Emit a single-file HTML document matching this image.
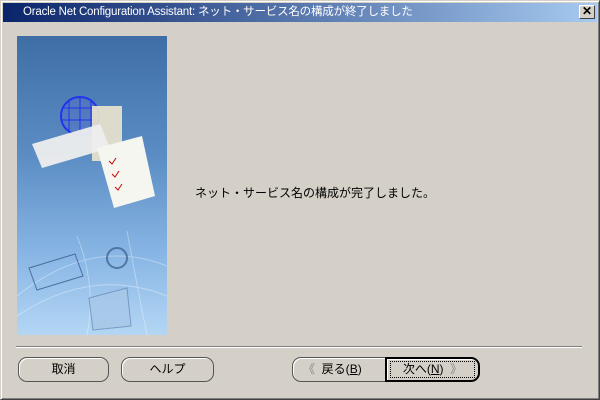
<!DOCTYPE html>
<html><head><meta charset="utf-8"><style>
*{margin:0;padding:0;box-sizing:border-box}
body{width:600px;height:400px;background:#d4d0c8;font-family:"Liberation Sans","Noto Sans CJK JP",sans-serif;font-size:12px;color:#000;position:relative;overflow:hidden}
.frame{position:absolute;left:0;top:0;width:600px;height:400px;border:1px solid;border-color:#d4d0c8 #404040 #404040 #d4d0c8;box-shadow:inset 1px 1px 0 #fff,inset -1px -1px 0 #808080}
.title{position:absolute;left:3px;top:3px;width:594px;height:19px;background:linear-gradient(to right,#0a246a,#a6caf0);color:#fff;font-size:11.5px;line-height:19px;padding-left:20px;letter-spacing:-0.2px}
.x{position:absolute;right:5px;top:5px;width:16px;height:14px;background:#d4d0c8;border:1px solid;border-color:#fff #404040 #404040 #fff;font-size:12px;line-height:11px;text-align:center;font-weight:bold;color:#000}
.img{position:absolute;left:17px;top:36px;width:150px;height:299px;background:linear-gradient(to bottom,#3f6ea6 0%,#5b8dc4 40%,#8bb8e6 75%,#b4d6f4 100%)}
.msg{position:absolute;left:195px;top:184px;font-size:12px}
.sep{position:absolute;left:16px;top:346px;width:566px;height:2px;border-top:1px solid #808080;border-bottom:1px solid #fff}
.btn{position:absolute;top:357px;height:25px;border:1px solid #555;border-radius:9px;background:#d4d0c8;text-align:center;line-height:23px;font-size:12px;box-shadow:inset 1px 1px 0 #fff}
</style></head><body>
<div class="frame"></div>
<div class="title">Oracle Net Configuration Assistant: ネット・サービス名の構成が終了しました</div>
<div class="x">✕</div>
<div class="img">
<svg width="150" height="299">
<circle cx="63" cy="80" r="19" fill="#5566cc" fill-opacity="0.3" stroke="#2233ee" stroke-width="2"/>
<path d="M46 72h34M45 84h36M52 64v32M63 61v38M74 64v32" stroke="#2233ee" fill="none"/>
<rect x="75" y="70" width="30" height="55" fill="#e4dfcc" opacity="0.95"/>
<polygon points="15,108 83,88 93,112 25,132" fill="#eeeeee" opacity="0.95"/>
<polygon points="80,112 125,100 138,160 97,172" fill="#f6f6f0"/>
<path d="M92 125l3 3 4-6M95 138l3 3 4-6M98 151l3 3 4-6" stroke="#c00" fill="none"/>
<g stroke="#ffffff" stroke-opacity="0.35" fill="none">
<path d="M0 260Q75 200 150 230M0 280Q75 230 150 260M60 200Q80 250 70 299M110 195Q120 250 130 299"/>
</g>
<circle cx="100" cy="222" r="10" fill="none" stroke="#2a4a7a" stroke-opacity="0.6" stroke-width="2"/>
<polygon points="72,262 110,252 114,290 76,294" fill="#a8c8e8" stroke="#6a8eb8" opacity="0.8"/>
<polygon points="12,232 58,218 66,240 20,254" fill="none" stroke="#1a3a6a" stroke-opacity="0.6"/>
</svg>
</div>
<div class="msg">ネット・サービス名の構成が完了しました。</div>
<div class="sep"></div>
<div class="btn" style="left:18px;width:91px">取消</div>
<div class="btn" style="left:121px;width:93px">ヘルプ</div>
<div class="btn" style="left:292px;width:95px;border-radius:9px 0 0 9px;text-align:left;padding-left:10px;color:#000"><span style="color:#888">《</span>&nbsp;&nbsp;戻る(<u>B</u>)</div>
<div class="btn" style="left:385px;width:95px;border:2px solid #000;border-radius:0 9px 9px 0;line-height:21px"><div style="position:absolute;left:3px;top:2px;right:3px;bottom:2px;border:1px dotted #000"></div>次へ(<u>N</u>)&nbsp;&nbsp;<span style="color:#888">》</span></div>
</body></html>
